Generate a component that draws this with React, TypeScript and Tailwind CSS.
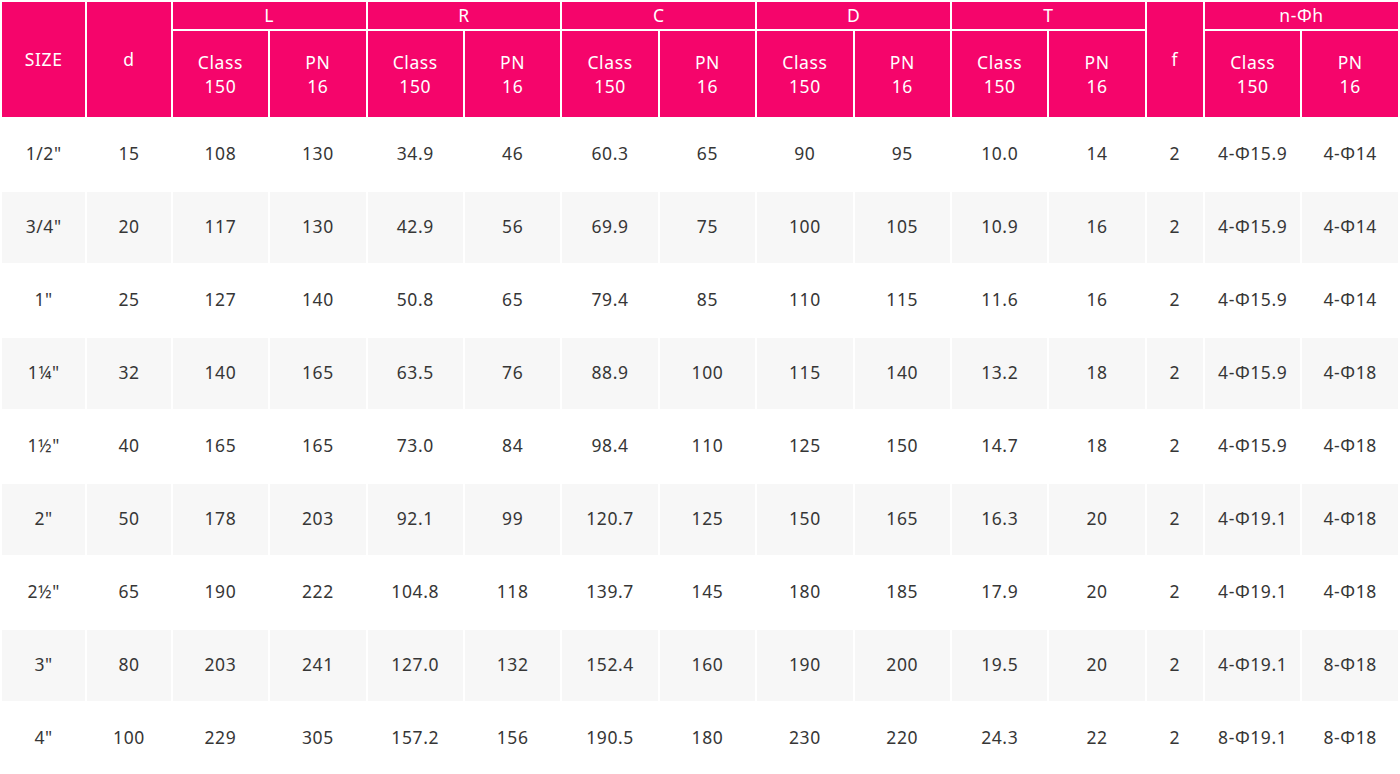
import React from 'react';

const groups = ['L', 'R', 'C', 'D', 'T'];

const rows: string[][] = [
  ['1/2"', '15', '108', '130', '34.9', '46', '60.3', '65', '90', '95', '10.0', '14', '2', '4-Φ15.9', '4-Φ14'],
  ['3/4"', '20', '117', '130', '42.9', '56', '69.9', '75', '100', '105', '10.9', '16', '2', '4-Φ15.9', '4-Φ14'],
  ['1"', '25', '127', '140', '50.8', '65', '79.4', '85', '110', '115', '11.6', '16', '2', '4-Φ15.9', '4-Φ14'],
  ['1¼"', '32', '140', '165', '63.5', '76', '88.9', '100', '115', '140', '13.2', '18', '2', '4-Φ15.9', '4-Φ18'],
  ['1½"', '40', '165', '165', '73.0', '84', '98.4', '110', '125', '150', '14.7', '18', '2', '4-Φ15.9', '4-Φ18'],
  ['2"', '50', '178', '203', '92.1', '99', '120.7', '125', '150', '165', '16.3', '20', '2', '4-Φ19.1', '4-Φ18'],
  ['2½"', '65', '190', '222', '104.8', '118', '139.7', '145', '180', '185', '17.9', '20', '2', '4-Φ19.1', '4-Φ18'],
  ['3"', '80', '203', '241', '127.0', '132', '152.4', '160', '190', '200', '19.5', '20', '2', '4-Φ19.1', '8-Φ18'],
  ['4"', '100', '229', '305', '157.2', '156', '190.5', '180', '230', '220', '24.3', '22', '2', '8-Φ19.1', '8-Φ18'],
];

const SubHead = () => (
  <>
    <th className="bg-[#f5056b] font-normal leading-6">Class<br />150</th>
    <th className="bg-[#f5056b] font-normal leading-6">PN<br />16</th>
  </>
);

export default function App() {
  return (
    <div className="w-[1400px] h-[774px] overflow-hidden bg-white font-['Noto_Sans',sans-serif]">
      <table className="w-[1400px] table-fixed border-separate border-spacing-[2px] text-center text-[17.5px] tracking-[0.6px]">
        <colgroup>
          <col className="w-[83px]" />
          <col className="w-[83px]" />
          {Array.from({ length: 10 }).map((_, i) => (
            <col key={i} className="w-[95px]" />
          ))}
          <col className="w-[56px]" />
          <col className="w-[95px]" />
          <col className="w-[95px]" />
        </colgroup>
        <thead className="text-white">
          <tr className="h-[27px]">
            <th rowSpan={2} className="bg-[#f5056b] font-normal">SIZE</th>
            <th rowSpan={2} className="bg-[#f5056b] font-normal">d</th>
            {groups.map((g) => (
              <th key={g} colSpan={2} className="bg-[#f5056b] font-normal leading-none">{g}</th>
            ))}
            <th rowSpan={2} className="bg-[#f5056b] font-normal">f</th>
            <th colSpan={2} className="bg-[#f5056b] font-normal leading-none">n-Φh</th>
          </tr>
          <tr className="h-[86px]">
            <SubHead />
            <SubHead />
            <SubHead />
            <SubHead />
            <SubHead />
            <SubHead />
          </tr>
        </thead>
        <tbody className="text-[#363636]">
          {rows.map((r, i) => (
            <tr key={i} className="h-[71px]">
              {r.map((c, j) => (
                <td key={j} className={`pb-[3px] ${i % 2 === 1 ? 'bg-[#f7f7f7]' : 'bg-white'}`}>{c}</td>
              ))}
            </tr>
          ))}
        </tbody>
      </table>
    </div>
  );
}
